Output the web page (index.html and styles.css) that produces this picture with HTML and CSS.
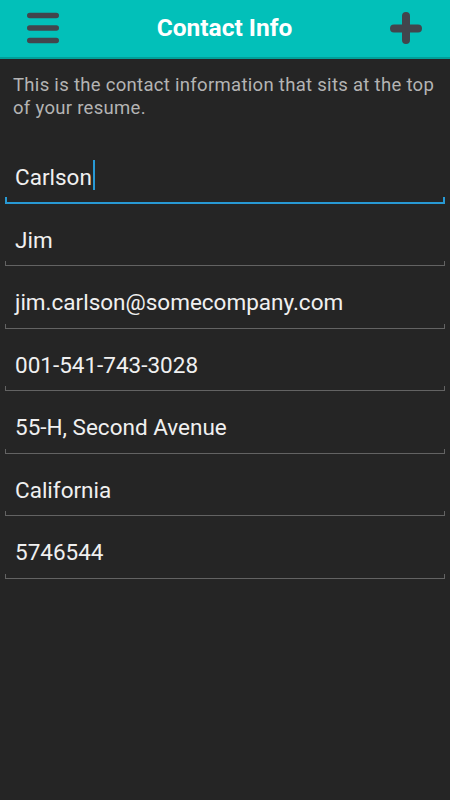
FILE: index.html
```html
<!DOCTYPE html>
<html lang="en">
<head>
  <meta charset="UTF-8" />
  <meta name="viewport" content="width=device-width, initial-scale=1.0" />
  <title>Contact Info</title>
  <link rel="stylesheet" href="styles.css">
</head>
<body>
  <header class="topbar">
    <svg class="icon" width="32" height="32" viewBox="0 0 32 32">
      <path d="M2.75 3.5H29.25M2.75 16H29.25M2.75 28.5H29.25" stroke="#42454c" stroke-width="5.5" stroke-linecap="round" fill="none"/>
    </svg>
    <h1 class="title">Contact Info</h1>
    <svg class="icon" width="32" height="32" viewBox="0 0 32 32">
      <path d="M4 16.5H28M16 4V28" stroke="#42454c" stroke-width="8" stroke-linecap="round" fill="none"/>
    </svg>
  </header>

  <main class="content">
    <p class="intro">This is the contact information that sits at the top of your resume.</p>

    <div class="fields">
      <div class="field active">Carlson<span class="caret"></span></div>
      <div class="field">Jim</div>
      <div class="field">jim.carlson@somecompany.com</div>
      <div class="field">001-541-743-3028</div>
      <div class="field">55-H, Second Avenue</div>
      <div class="field">California</div>
      <div class="field">5746544</div>
    </div>
  </main>
</body>
</html>
```

FILE: styles.css
```css
* {
  margin: 0;
  padding: 0;
  box-sizing: border-box;
}

html, body {
  height: 100%;
  overflow: hidden;
  font-family: Roboto, "Liberation Sans", sans-serif;
  background-color: #252525;
}

.topbar {
  height: 59px;
  display: flex;
  align-items: center;
  justify-content: space-between;
  padding: 0 28px 2px 27px;
  background-color: #02c0b9;
  border-bottom: 2px solid #00a098;
}

.icon {
  display: block;
}

.title {
  color: #ffffff;
  font-size: 24.5px;
  font-weight: bold;
}

.intro {
  padding: 15px 12px 0 13px;
  font-size: 18.5px;
  line-height: 22.5px;
  letter-spacing: 0.3px;
  color: #b4b4b4;
}

.fields {
  margin-top: 22px;
  padding: 0 5px;
}

.field {
  position: relative;
  height: 62.5px;
  padding: 21px 0 0 10px;
  font-size: 22.5px;
  line-height: 30px;
  color: #f0f0f0;
}

.field::after {
  content: "";
  position: absolute;
  left: 0;
  right: 0;
  bottom: 0;
  height: 4px;
  border: 1px solid #636363;
  border-top: none;
}

.field.active::after {
  height: 5px;
  border-width: 0 2px 2px;
  border-color: #2899d4;
}

.caret {
  display: inline-block;
  width: 2px;
  height: 30px;
  margin: -4px 0 0 1px;
  vertical-align: -5px;
  background-color: #2899d4;
}
```
